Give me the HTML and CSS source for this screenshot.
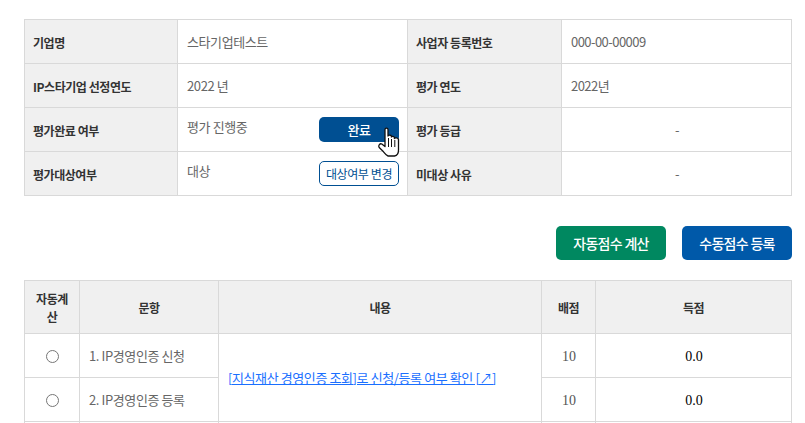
FILE: index.html
```html
<!DOCTYPE html>
<html lang="en">
<head>
  <meta charset="UTF-8">
  <title>IP스타기업 평가</title>
  <link rel="stylesheet" href="styles.css">
</head>
<body>

  <div class="wrap">
    <table class="info">
      <colgroup>
        <col class="col-th1"><col class="col-td1"><col class="col-th2"><col>
      </colgroup>
      <tr>
        <th>기업명</th>
        <td>스타기업테스트</td>
        <th>사업자 등록번호</th>
        <td class="biz-no">000-00-00009</td>
      </tr>
      <tr>
        <th>IP스타기업 선정연도</th>
        <td>2022 년</td>
        <th>평가 연도</th>
        <td class="biz-no">2022년</td>
      </tr>
      <tr>
        <th>평가완료 여부</th>
        <td>
          <div class="cell-row">
            <span>평가 진행중</span>
            <span class="hand-anchor">
              <button class="btn-done">완료</button>
              <svg class="hand" width="22" height="30" viewBox="0 0 22 30">
                <path d="M7 2.5 C7 0.6 10 0.6 10 2.5 L10 9 C10.5 7.8 13 7.8 13.4 9 L13.4 10 C14 9 16 9 16.4 10.4 L16.4 11.5 C17 10.6 20 10.6 20.5 12.5 L20.5 23 C20.5 26 19 28.5 16.5 29 L10 29 C8 28.5 6.5 26 5 24.2 L1.2 20.5 C0 18.5 2 16 3.8 17 L7 19.5 Z" fill="#fff" stroke="#111" stroke-width="1.3" stroke-linejoin="round"/>
                <path d="M10.5 11 V20 M13.5 12 V20 M16.8 13 V20" fill="none" stroke="#111" stroke-width="1"/>
              </svg>
            </span>
          </div>
        </td>
        <th>평가 등급</th>
        <td class="center">-</td>
      </tr>
      <tr>
        <th>평가대상여부</th>
        <td>
          <div class="cell-row">
            <span>대상</span>
            <button class="btn-change">대상여부 변경</button>
          </div>
        </td>
        <th>미대상 사유</th>
        <td class="center">-</td>
      </tr>
    </table>

    <div class="actions">
      <button class="btn-auto">자동점수 계산</button>
      <button class="btn-manual">수동점수 등록</button>
    </div>

    <table class="score">
      <colgroup>
        <col class="col-auto"><col class="col-item"><col class="col-content"><col class="col-point"><col>
      </colgroup>
      <tr>
        <th>자동계산</th>
        <th>문항</th>
        <th>내용</th>
        <th>배점</th>
        <th>득점</th>
      </tr>
      <tr>
        <td class="center"><input type="radio" name="q1"></td>
        <td>1. IP경영인증 신청</td>
        <td rowspan="2"><a href="#">[지식재산 경영인증 조회]로 신청/등록 여부 확인 [↗]</a></td>
        <td class="center num">10</td>
        <td class="center num total">0.0</td>
      </tr>
      <tr>
        <td class="center"><input type="radio" name="q2"></td>
        <td>2. IP경영인증 등록</td>
        <td class="center num">10</td>
        <td class="center num total">0.0</td>
      </tr>
      <tr>
        <td></td><td></td><td></td><td></td><td></td>
      </tr>
    </table>
  </div>

</body>
</html>
```

FILE: styles.css
```css
html, body {
  margin: 0;
  height: 423px;
  overflow: hidden;
  background: #fff;
}
body {
  font-family: "Noto Sans CJK KR", "Noto Sans", sans-serif;
  font-size: 13px;
  color: #666;
  letter-spacing: -0.4px;
}
.wrap {
  width: 768px;
  padding: 19px 0 0 24px;
}
table {
  width: 768px;
  border-collapse: collapse;
  table-layout: fixed;
}
th, td {
  border: 1px solid #d9d9d9;
  height: 43px;
  padding: 0 9px;
  box-sizing: content-box;
  font-size: 13px;
  line-height: 18px;
}
td {
  padding-right: 8px;
}
th {
  background: #f0f0f0;
  color: #333;
  font-size: 12px;
  font-weight: 700;
  letter-spacing: -0.45px;
  text-align: left;
  height: 41px;
  padding: 2px 8px 0;
}
.col-th1 { width: 153px; }
.col-td1 { width: 230px; }
.col-th2 { width: 154px; }
.center {
  text-align: center;
}
.biz-no {
  letter-spacing: -0.55px;
}
.cell-row {
  display: flex;
  justify-content: space-between;
  align-items: center;
}
.cell-row > span:first-child {
  margin-top: -5px;
}
button {
  font-family: inherit;
  cursor: pointer;
}
.btn-done {
  display: block;
  width: 80px;
  height: 25px;
  padding: 0;
  border: none;
  border-radius: 5px;
  background: #004f92;
  color: #fff;
  font-size: 13px;
  font-weight: 500;
  letter-spacing: -0.5px;
}
.btn-change {
  width: 80px;
  height: 25px;
  padding: 0;
  border: 1px solid #004f92;
  border-radius: 5px;
  background: #fff;
  color: #004f92;
  font-size: 12px;
  letter-spacing: -0.4px;
}
.hand-anchor {
  position: relative;
}
.hand {
  position: absolute;
  left: 59px;
  top: 10px;
}
.actions {
  display: flex;
  justify-content: flex-end;
  gap: 16px;
  margin: 30px 0 20px;
}
.actions button {
  width: 110px;
  height: 34px;
  padding: 0;
  border: none;
  border-radius: 5px;
  color: #fff;
  font-size: 14px;
  font-weight: 500;
  letter-spacing: -0.7px;
}
.btn-auto {
  background: #008860;
}
.btn-manual {
  background: #0059a9;
}
.score th {
  height: 50px;
  text-align: center;
  padding: 2px 9px 0;
}
.col-auto { width: 55px; }
.col-item { width: 139px; }
.col-content { width: 323px; }
.col-point { width: 54px; }
.score a {
  color: #1a6fff;
}
.score input[type="radio"] {
  width: 13px;
  height: 13px;
  margin: 0;
  vertical-align: middle;
}
.num {
  font-family: "Liberation Serif", serif;
  font-size: 14px;
  letter-spacing: 0;
  color: #555;
  height: 41px;
  padding-top: 2px;
}
.total {
  color: #000;
}
```
